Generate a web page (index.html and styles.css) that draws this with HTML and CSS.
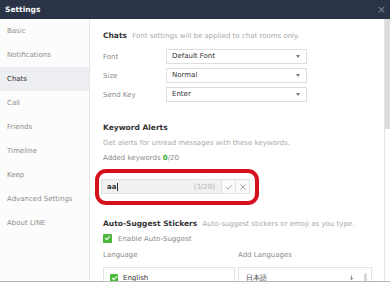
FILE: index.html
```html
<!DOCTYPE html>
<html>
<head>
    <title>Settings</title>
    <link rel="stylesheet" href="styles.css">
</head>
<body>
    <div class="window">
        <div class="titlebar">
            <span class="title">Settings</span>
            <span class="close">&times;</span>
        </div>
        <div class="main">
            <ul class="sidebar">
                <li>Basic</li>
                <li>Notifications</li>
                <li class="active">Chats</li>
                <li>Call</li>
                <li>Friends</li>
                <li>Timeline</li>
                <li>Keep</li>
                <li>Advanced Settings</li>
                <li>About LINE</li>
            </ul>

            <div class="content">
                <div class="heading">
                    <b>Chats</b>
                    <span class="hint">Font settings will be applied to chat rooms only.</span>
                </div>
                <div class="row">
                    <span class="label">Font</span>
                    <div class="select">Default Font<span class="caret"></span></div>
                </div>
                <div class="row">
                    <span class="label">Size</span>
                    <div class="select">Normal<span class="caret"></span></div>
                </div>
                <div class="row">
                    <span class="label">Send Key</span>
                    <div class="select">Enter<span class="caret"></span></div>
                </div>

                <div class="heading section">
                    <b>Keyword Alerts</b>
                </div>
                <p class="hint line">Get alerts for unread messages with these keywords.</p>
                <p class="label line">Added keywords <span class="count">0</span>/20</p>

                <!-- red annotation ring -->
                <div class="highlight">
                    <div class="keyword">
                        <span class="typed">aa<span class="cursor"></span></span>
                        <span class="limit">(3/20)</span>
                        <span class="kbtn">
                            <svg width="8" height="8" viewBox="0 0 8 8"><path d="M1 4.2 L3 6.2 L7 1.8" fill="none" stroke="#a9a9a9" stroke-width="1"/></svg>
                        </span>
                        <span class="kbtn">
                            <svg width="8" height="8" viewBox="0 0 8 8"><path d="M1.5 1.5 L6.5 6.5 M6.5 1.5 L1.5 6.5" fill="none" stroke="#a9a9a9" stroke-width="1"/></svg>
                        </span>
                    </div>
                </div>

                <div class="heading stickers">
                    <b>Auto-Suggest Stickers</b>
                    <span class="hint">Auto-suggest stickers or emoji as you type.</span>
                </div>
                <div class="check-row">
                    <span class="check"></span>
                    <span class="label">Enable Auto-Suggest</span>
                </div>

                <div class="langs">
                    <div class="lang-col">
                        <p class="label">Language</p>
                        <div class="lang-box">
                            <span class="check small"></span>
                            <span class="lang-name">English</span>
                        </div>
                    </div>
                    <div class="lang-col right">
                        <p class="label">Add Languages</p>
                        <div class="lang-box">
                            <span class="lang-name">日本語</span>
                            <svg class="dl" width="7" height="7" viewBox="0 0 7 7"><path d="M3.5 0.5 V4.5 M1.8 3 L3.5 4.6 L5.2 3 M0.5 6.5 H6.5" fill="none" stroke="#888" stroke-width="0.9"/></svg>
                            <span class="mini-scroll"></span>
                        </div>
                    </div>
                </div>
            </div>

            <div class="scrollbar"><div class="thumb"></div></div>
        </div>
    </div>
</body>
</html>
```

FILE: styles.css
```css
body {
    margin: 0;
    font-family: 'DejaVu Sans', Verdana, sans-serif;
    font-size: 7px;
    color: #333;
    background-color: #fff;
}

p {
    margin: 0;
}

.window {
    height: 281px;
    border-bottom: 1px solid #b9b9b9;
    display: flex;
    flex-direction: column;
    overflow: hidden;
}

.titlebar {
    height: 19px;
    background-color: #2b3447;
    display: flex;
    align-items: center;
    justify-content: space-between;
    padding: 0 4px 0 5px;
    flex-shrink: 0;
}

.title {
    color: #fff;
    font-weight: bold;
    font-size: 7.5px;
}

.close {
    color: #7d8594;
    font-size: 11px;
    line-height: 1;
}

.main {
    flex: 1;
    display: flex;
    min-height: 0;
}

/* Sidebar */
.sidebar {
    list-style: none;
    margin: 0;
    padding: 0;
    width: 89px;
    border-right: 1px solid #e6e6e6;
    background-color: #fcfcfc;
    flex-shrink: 0;
}

.sidebar li {
    height: 24px;
    line-height: 24px;
    padding-left: 7px;
    color: #8d8d8d;
}

.sidebar li.active {
    background-color: #eceef2;
    color: #333;
}

/* Content */
.content {
    flex: 1;
    padding: 12px 0 0 13px;
    min-width: 0;
}

.heading b {
    font-size: 7.5px;
    color: #333;
    margin-right: 3px;
}

.hint {
    color: #a9a9a9;
}

.label {
    color: #8a8a8a;
}

.row {
    display: flex;
    align-items: center;
    margin-top: 4px;
}

.heading + .row {
    margin-top: 9px;
}

.row .label {
    width: 63px;
}

.select {
    width: 134px;
    height: 13px;
    line-height: 13px;
    border: 1px solid #dedede;
    padding-left: 5px;
    color: #333;
    position: relative;
}

.caret {
    position: absolute;
    right: 6px;
    top: 5px;
    border-left: 2px solid transparent;
    border-right: 2px solid transparent;
    border-top: 3px solid #777;
}

.section {
    margin-top: 21px;
}

.line {
    margin-top: 7px;
}

.count {
    color: #3bab2c;
    font-weight: bold;
}

/* Red annotation ring around the keyword input */
.highlight {
    margin: 7px 0 0 -8px;
    width: 149px;
    border: 4px solid #d4101d;
    border-radius: 11px;
    padding: 6px 5px 7px 2px;
}

.keyword {
    display: flex;
    align-items: center;
    height: 13px;
    border: 1px solid #e2e2e2;
    background-color: #f1f1f1;
}

.typed {
    flex: 1;
    padding-left: 5px;
    font-weight: bold;
    color: #333;
    display: flex;
    align-items: center;
}

.cursor {
    width: 1px;
    height: 8px;
    background-color: #333;
    margin-left: 1px;
}

.limit {
    color: #b3b3b3;
    margin-right: 6px;
}

.kbtn {
    width: 13px;
    height: 13px;
    border-left: 1px solid #e2e2e2;
    background-color: #fafafa;
    display: flex;
    align-items: center;
    justify-content: center;
}

.stickers {
    margin-top: 14px;
}

.check-row {
    display: flex;
    align-items: center;
    margin-top: 6px;
}

.check {
    width: 9px;
    height: 9px;
    border-radius: 1px;
    background-color: #4cb83c;
    margin-right: 6px;
    position: relative;
}

.check::after {
    content: '';
    position: absolute;
    left: 3px;
    top: 1px;
    width: 2px;
    height: 4px;
    border: solid #fff;
    border-width: 0 1.2px 1.2px 0;
    transform: rotate(45deg);
}

.check.small {
    width: 8px;
    height: 8px;
    margin-right: 5px;
}

.langs {
    display: flex;
    gap: 3px;
    margin-top: 8px;
}

.lang-col {
    width: 132px;
}

.lang-col.right {
    width: 134px;
}

.lang-box {
    margin-top: 8px;
    height: 20px;
    border: 1px solid #e3e3e3;
    border-bottom: none;
    display: flex;
    align-items: center;
    padding-left: 6px;
}

.lang-col.right .lang-box {
    padding-left: 7px;
}

.lang-name {
    color: #333;
    flex: 1;
}

.dl {
    margin-right: 9px;
}

.mini-scroll {
    width: 3px;
    height: 11px;
    border-radius: 2px;
    background-color: #d8d8d8;
    margin-right: 4px;
}

.scrollbar {
    width: 5px;
    border-left: 1px solid #e4e4e4;
    flex-shrink: 0;
    margin-left: 5px;
}

.thumb {
    height: 110px;
    background-color: #dcdcdc;
}
```
